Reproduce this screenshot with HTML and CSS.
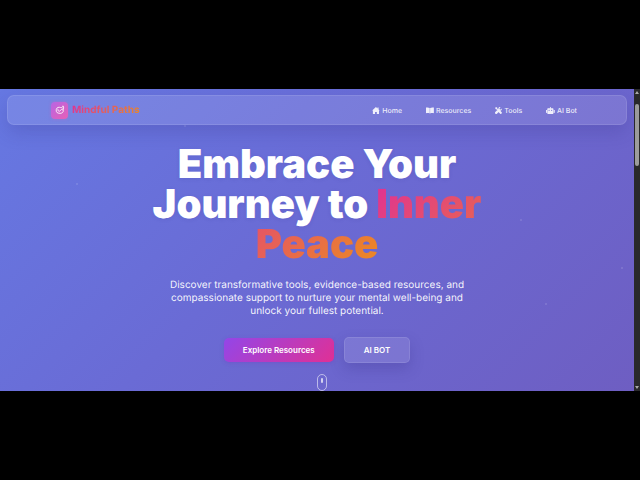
FILE: index.html
```html
<!DOCTYPE html>
<html lang="en">
<head>
    <meta charset="UTF-8">
    <meta name="viewport" content="width=device-width, initial-scale=1.0">
    <title>Mindful Paths</title>
    <link rel="stylesheet" href="styles.css">
</head>
<body>
    <div class="screen">
        <div class="page">
            <div class="particles" aria-hidden="true">
                <span class="particle p1"></span>
                <span class="particle p2"></span>
                <span class="particle p3"></span>
                <span class="particle p4"></span>
                <span class="particle p5"></span>
            </div>
            <nav class="navbar">
                <a href="#" class="logo">
                    <span class="logo-icon">
                        <svg viewBox="0 0 24 24" fill="none" stroke="currentColor" stroke-width="2" stroke-linecap="round" stroke-linejoin="round">
                            <path d="M19 9c3 6 0 11-7 11S2 17 3 11s7-6 10-5c3 1 6 0 6-4 3 4 2 8-1 10"/>
                            <path d="M7 11c0 3 2 5 4 4l5-5"/>
                        </svg>
                    </span>
                    <span class="logo-text">Mindful Paths</span>
                </a>
                <ul class="nav-links">
                    <li><a href="#home"><svg viewBox="0 0 576 512"><path d="M288 5 10 265h54v220c0 15 10 27 25 27h135V360h128v152h135c15 0 25-12 25-27V265h54l-86-76V40h-80v74z"/></svg>Home</a></li>
                    <li><a href="#resources"><svg viewBox="0 0 576 512"><path d="M0 45c100-25 195-15 275 25v400C200 430 100 425 0 450zM301 70c80-40 175-50 275-25v405c-102-25-197-20-275 20z"/></svg>Resources</a></li>
                    <li><a href="#tools"><svg viewBox="0 0 512 512"><path d="M75 5 5 75l55 90 70 12 100 100 48-48-100-100-12-70zM500 110l-80 80-75-22-20-75 80-80c-85-25-170 40-160 130L20 365c-65 75 45 190 125 125l220-225c90 15 165-70 135-155zM320 290l-65 70 125 125c70 60 170-40 105-110L375 260z"/></svg>Tools</a></li>
                    <li><a href="#ai-bot"><svg viewBox="0 0 640 512"><path fill-rule="evenodd" d="M290 0h60v90h125c40 0 70 30 70 70v280c0 40-30 70-70 70H165c-40 0-70-30-70-70V160c0-40 30-70 70-70h125zM225 210a38 38 0 1 0 1 0zM415 210a38 38 0 1 0 1 0zM0 220h70v210H40c-22 0-40-18-40-40zM570 220h70v170c0 22-18 40-40 40h-30z"/></svg>AI Bot</a></li>
                </ul>
            </nav>
            <main class="hero">
                <h1>Embrace Your Journey to <span class="highlight">Inner Peace</span></h1>
                <p>Discover transformative tools, evidence-based resources, and compassionate support to nurture your mental well-being and unlock your fullest potential.</p>
                <div class="hero-buttons">
                    <button type="button" class="btn btn-primary">Explore Resources</button>
                    <button type="button" class="btn btn-glass">AI BOT</button>
                </div>
                <div class="scroll-indicator"></div>
            </main>
        </div>
        <div class="scrollbar" aria-hidden="true">
            <span class="arrow arrow-up"></span>
            <span class="thumb"></span>
            <span class="arrow arrow-down"></span>
        </div>
    </div>
</body>
</html>
```

FILE: styles.css
```css
:root { --pink: #e03095; --orange: #ec8b20; --purple: #9346e8; --glass: rgba(255, 255, 255, 0.11); --glass-border: rgba(255, 255, 255, 0.1); }
* { box-sizing: border-box; }
body { margin: 0; min-height: 100vh; background: #000; font-family: Inter, sans-serif; color: #fff; text-rendering: geometricPrecision; display: flex; flex-direction: column; justify-content: center; }
.screen { display: flex; overflow: hidden; }
.page { position: relative; flex: 1; padding: 6px 7px 0; background: linear-gradient(135deg, #6678e2 0%, #6a6bd5 45%, #6e5ec2 100%); }

.navbar { position: relative; display: flex; justify-content: space-between; align-items: center; height: 30px; padding: 0 49px 0 43px; background: var(--glass); border: 1px solid var(--glass-border); border-radius: 7px; box-shadow: 0 8px 18px rgba(50, 45, 130, 0.2); }
.logo { display: flex; align-items: center; gap: 4px; color: #fff; text-decoration: none; }
.logo-icon { display: flex; align-items: center; justify-content: center; width: 17px; height: 17px; border-radius: 4px; background: linear-gradient(135deg, #b765e4, #e760b6); box-shadow: 0 0 3px rgba(224, 90, 190, 0.5); }
.logo-icon svg { width: 10px; height: 10px; }
.logo-text { font-size: 10px; font-weight: 700; background: linear-gradient(135deg, var(--pink), var(--orange)); -webkit-background-clip: text; background-clip: text; color: transparent; }
.nav-links { display: flex; gap: 24px; margin: 0; padding: 0; list-style: none; }
.nav-links a { display: flex; align-items: center; gap: 2px; color: rgba(255, 255, 255, 0.88); font-size: 7px; font-weight: 500; text-decoration: none; }
.nav-links svg { height: 7px; fill: currentColor; }

.hero { display: flex; flex-direction: column; align-items: center; padding-top: 19px; text-align: center; }
h1 { max-width: 340px; margin: 0 0 15px; font-size: 40px; font-weight: 900; line-height: 40px; text-shadow: 0 1px 4px rgba(40, 40, 120, 0.1); }
.highlight { background: linear-gradient(135deg, var(--pink), var(--orange)); -webkit-background-clip: text; background-clip: text; color: transparent; text-shadow: none; }
.hero p { max-width: 310px; margin: 0 0 19px; font-size: 10px; line-height: 13px; color: rgba(255, 255, 255, 0.94); }
.hero-buttons { display: flex; align-items: center; gap: 10px; margin-bottom: 11px; }
.btn { height: 26px; padding: 0 19px; border: none; border-radius: 5px; color: #fff; font-family: inherit; font-size: 8px; font-weight: 600; cursor: pointer; }
.btn-primary { height: 24px; background: linear-gradient(135deg, var(--purple), var(--pink)); box-shadow: 0 1px 4px rgba(120, 50, 190, 0.3); }
.btn-glass { background: var(--glass); border: 1px solid var(--glass-border); box-shadow: 0 6px 14px rgba(50, 45, 130, 0.25); }
.scroll-indicator { display: flex; justify-content: center; align-self: flex-start; width: 10px; height: 17px; margin-left: 50%; padding-top: 3px; border: 1px solid rgba(255, 255, 255, 0.55); border-radius: 5px; }
.scroll-indicator::before { content: ""; width: 2px; height: 5px; border-radius: 1px; background: rgba(255, 255, 255, 0.7); }

.particle { position: absolute; width: 2px; height: 2px; border-radius: 50%; background: rgba(255, 255, 255, 0.15); }
.p1 { left: 12%; top: 31%; }
.p2 { left: 29%; top: 12%; }
.p3 { left: 82%; top: 43%; }
.p4 { left: 98%; top: 59%; }
.p5 { left: 86%; top: 71%; }

.scrollbar { display: flex; flex-direction: column; align-items: center; width: 6px; padding: 2px 0; background: #29292b; }
.arrow { border: 2px solid transparent; }
.arrow-up { border-top: none; border-bottom: 3px solid #aaa; }
.arrow-down { border-bottom: none; border-top: 3px solid #aaa; margin-top: auto; }
.thumb { width: 4px; height: 62px; margin-top: 10px; border-radius: 2px; background: #9d9d9d; }
```
